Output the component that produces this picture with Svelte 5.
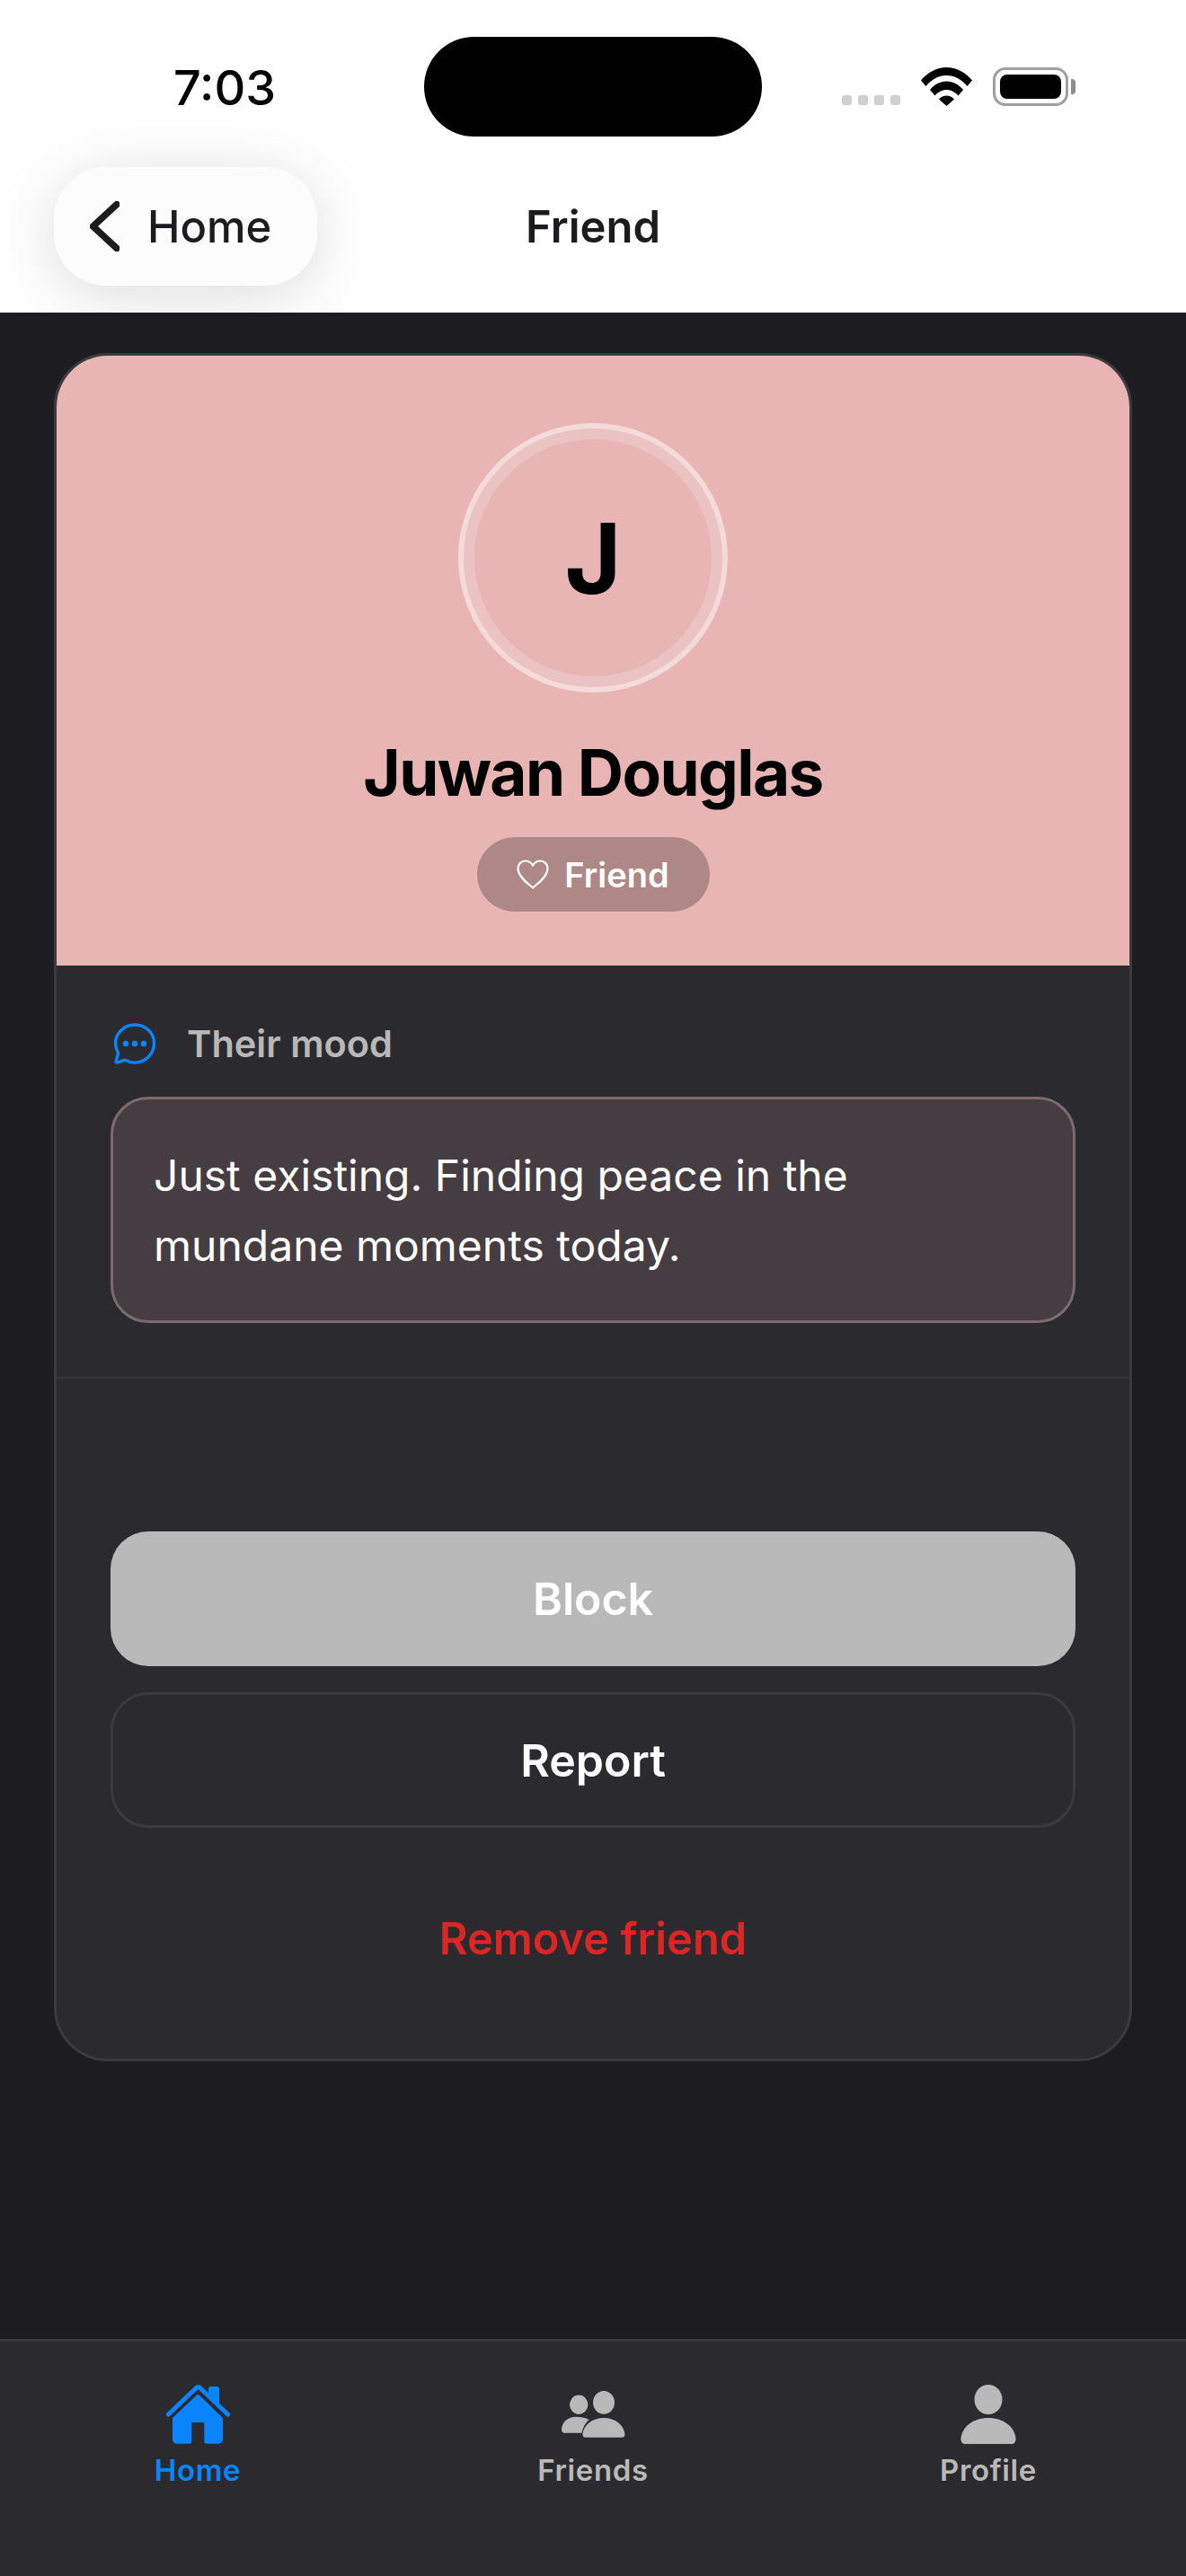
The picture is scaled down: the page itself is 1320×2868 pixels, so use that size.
<script lang="ts">
	const moodText = 'Just existing. Finding peace in the mundane moments today.';
	const tabs = [
		{ id: 'home', label: 'Home', active: true },
		{ id: 'friends', label: 'Friends', active: false },
		{ id: 'profile', label: 'Profile', active: false }
	];
</script>

<div class="screen">
	<header class="top">
		<div class="status">
			<div class="status-side"><span class="time">7:03</span></div>
			<div class="island"></div>
			<div class="status-side right">
				<div class="dots"><i></i><i></i><i></i><i></i></div>
				<svg class="wifi" width="57" height="43" viewBox="0 0 57 43">
					<path d="M0 14.5C7.5 5.5 17.5 0 28.5 0S49.5 5.5 57 14.5l-5.5 6.5C45.5 13.5 37.5 9 28.5 9S11.500 13.500 5.500 21z" />
					<path d="M10 25c5-6 11.500-9.500 18.500-9.500S42 19 47 25l-5.500 6.500c-3.500-4-8-6.500-13-6.500s-9.500 2.500-13 6.500z" />
					<path d="M20 35.500c2.200-2.500 5.200-4 8.500-4s6.300 1.500 8.500 4L28.500 43z" />
				</svg>
				<div class="battery"><div class="battery-fill"></div></div>
				<div class="battery-cap"></div>
			</div>
		</div>
		<nav class="nav">
			<button class="back">
				<svg width="33" height="56" viewBox="0 0 33 56" fill="none">
					<path d="M30 3.500 3.500 28 30 52.500" stroke="#1c1c1e" stroke-width="7.500" stroke-linecap="round" stroke-linejoin="round" />
				</svg>
				<span>Home</span>
			</button>
			<span class="nav-title">Friend</span>
			<span></span>
		</nav>
	</header>

	<main class="main">
		<section class="card">
			<div class="hero">
				<div class="avatar"><span>J</span></div>
				<h1 class="name">Juwan Douglas</h1>
				<div class="badge">
					<svg width="36" height="33" viewBox="0 0 36 33" fill="none">
						<path d="M18 31.500C14 27.500 1.500 19.500 1.500 10 1.500 5 5 1.500 9.800 1.500c3.500 0 6.500 1.800 8.200 5.200 1.700-3.400 4.700-5.200 8.200-5.200C31 1.500 34.500 5 34.500 10c0 9.500-12.500 17.500-16.500 21.500z" stroke="#fff" stroke-width="2.200" stroke-linejoin="round" />
					</svg>
					<span>Friend</span>
				</div>
			</div>

			<div class="mood">
				<div class="mood-head">
					<svg width="48" height="47" viewBox="0 0 48 47" fill="none">
						<path d="M24 2C12.500 2 2.500 11 2.500 22.500c0 3.600 1 7 2.700 10 .4.700.5 1.400.2 2.100l-2.300 7.900c-.3 1.100.6 2 1.600 1.500l7.200-2.600c.7-.3 1.400-.2 2 .1 3.100 1.700 6.500 2.600 10.100 2.600 11.800 0 21.500-9.600 21.500-21.500S35.800 2 24 2z" stroke="#0a84ff" stroke-width="3.400" stroke-linejoin="round" />
						<circle cx="14" cy="23" r="3.200" fill="#0a84ff" />
						<circle cx="24" cy="23" r="3.200" fill="#0a84ff" />
						<circle cx="34" cy="23" r="3.200" fill="#0a84ff" />
					</svg>
					<span>Their mood</span>
				</div>
				<p class="mood-box">{moodText}</p>
			</div>

			<div class="actions">
				<button class="btn block">Block</button>
				<button class="btn report">Report</button>
				<button class="btn remove">Remove friend</button>
			</div>
		</section>
	</main>

	<footer class="tabbar">
		{#each tabs as tab}
			<div class="tab" class:active={tab.active}>
				<div class="tab-icon">
					{#if tab.id === 'home'}
						<svg width="71" height="66" viewBox="0 0 71 66">
							<path d="M47 10V4.500C47 3 48 2 49.500 2h7C58 2 59 3 59 4.500V21z" fill="#0a84ff" />
							<path d="M2.500 33 33.500 3.500c1-1 3-1 4 0L68.500 33" fill="none" stroke="#0a84ff" stroke-width="5" stroke-linecap="round" stroke-linejoin="round" />
							<path d="M7 37 34 11.500c.800-.800 2-.800 2.800 0L63 37v24c0 2.700-2 4.700-4.700 4.700H45c-1.600 0-2.700-1.100-2.700-2.700V42H28.300v21c0 1.600-1.100 2.700-2.700 2.700H11.700C9 65.700 7 63.700 7 61z" fill="#0a84ff" />
						</svg>
					{:else if tab.id === 'friends'}
						<svg width="71" height="52" viewBox="0 0 71 52" fill="#b9b9b9">
							<ellipse cx="19.200" cy="15.300" rx="10.200" ry="10.700" />
							<ellipse cx="47" cy="12.800" rx="12" ry="12.900" />
							<path d="M0 43C.500 34 7.500 28.700 16 28.700c5 0 10.500 1 14.500 3.300-3.800 3.500-6.500 8-8 14.700H3.500C1.200 46.700 0 45.200 0 43z" />
							<path d="M23.500 48C24.500 38 34 30 47 30s22.500 8 23.400 18c.200 2.200-.900 3.700-2.900 3.700h-41c-2 0-3.200-1.500-3-3.700z" />
						</svg>
					{:else}
						<svg width="62" height="66" viewBox="0 0 62 66" fill="#b9b9b9">
							<ellipse cx="31" cy="16.500" rx="15.500" ry="16.500" />
							<path d="M.500 60C1.500 47 14 37 31 37s29.500 10 30.500 23c.200 3.500-1.500 6-4.500 6H5c-3 0-4.700-2.500-4.500-6z" />
						</svg>
					{/if}
				</div>
				<span class="tab-label">{tab.label}</span>
			</div>
		{/each}
	</footer>
</div>

<style>
	:global(body) {
		margin: 0;
		background: #1d1d21;
	}

	.screen {
		width: 1320px;
		height: 2868px;
		display: flex;
		flex-direction: column;
		font-family: Inter, 'Noto Sans', sans-serif;
		background: #1d1d21;
		overflow: hidden;
	}

	.top {
		height: 348px;
		background: #fff;
		flex: none;
		box-sizing: border-box;
		padding-top: 41px;
		overflow: hidden;
	}

	.status {
		display: grid;
		grid-template-columns: 472px 376px 472px;
		height: 111px;
	}
	.status-side {
		display: flex;
		align-items: center;
		padding-left: 193px;
	}
	.status-side.right {
		padding: 34px 0 0 89px;
		align-items: flex-start;
	}
	.time {
		font-size: 54px;
		font-weight: 500;
		color: #000;
		line-height: 1;
		margin-top: 2px;
		white-space: nowrap;
	}
	.island {
		background: #000;
		border-radius: 56px;
	}
	.dots {
		display: flex;
		gap: 7px;
		margin-top: 31px;
	}
	.dots i {
		width: 11px;
		height: 11px;
		border-radius: 3px;
		background: #d0d0d0;
	}
	.wifi {
		margin-left: 23px;
		fill: #000;
	}
	.battery {
		width: 84px;
		height: 43px;
		box-sizing: border-box;
		border: 3px solid #a0a0a0;
		border-radius: 14px;
		padding: 5px;
		margin-left: 23px;
	}
	.battery-fill {
		height: 100%;
		background: #000;
		border-radius: 8px;
	}
	.battery-cap {
		width: 5px;
		height: 17px;
		background: #8e8e8e;
		border-radius: 0 4px 4px 0;
		margin: 13px 0 0 3px;
	}

	.nav {
		display: grid;
		grid-template-columns: 1fr auto 1fr;
		align-items: center;
		padding: 0 60px;
		margin-top: 34px;
	}
	.back {
		justify-self: start;
		width: 293px;
		height: 132px;
		box-sizing: border-box;
		display: flex;
		align-items: center;
		gap: 31px;
		padding: 0 0 0 40px;
		border: none;
		border-radius: 58px;
		background: #fcfcfc;
		box-shadow: 0 10px 70px rgba(0, 0, 0, 0.14);
		font: 500 49px Inter, sans-serif;
		color: #1c1c1e;
	}
	.nav-title {
		font-size: 49px;
		font-weight: 600;
		color: #1c1c1e;
	}

	.main {
		flex: 1;
		padding: 45px 60px 0;
		box-sizing: border-box;
	}

	.card {
		border: 3px solid #3a3a3f;
		border-radius: 60px;
		background: #2b2b2f;
		overflow: hidden;
	}

	.hero {
		background: #e8b4b4;
		display: flex;
		flex-direction: column;
		align-items: center;
		padding: 75px 0 60px;
	}
	.avatar {
		width: 300px;
		height: 300px;
		box-sizing: border-box;
		border-radius: 50%;
		border: 6px solid rgba(255, 255, 255, 0.5);
		box-shadow: inset 0 0 0 12px rgba(255, 255, 255, 0.2);
		display: flex;
		align-items: center;
		justify-content: center;
		font-size: 108px;
		font-weight: 700;
		color: #000;
	}
	.name {
		margin: 45px 0 28px;
		font-size: 71px;
		line-height: 88px;
		font-weight: 700;
		color: #000;
		letter-spacing: -1.6px;
	}
	.badge {
		height: 83px;
		width: 259px;
		box-sizing: border-box;
		border-radius: 42px;
		background: rgba(0, 0, 0, 0.25);
		display: flex;
		align-items: center;
		justify-content: center;
		gap: 17px;
		color: #fff;
		font-size: 38px;
		font-weight: 600;
	}

	.mood {
		padding: 64px 60px 60px;
		border-bottom: 2px solid #36363a;
	}
	.mood-head {
		display: flex;
		align-items: center;
		gap: 34px;
		margin: 0 0 35px 3px;
		color: #b8b8b8;
		font-size: 41.5px;
		font-weight: 600;
	}
	.mood-head span {
		line-height: 47px;
	}
	.mood-box {
		margin: 0;
		box-sizing: border-box;
		height: 252px;
		padding: 46px 120px 44px 45px;
		border: 3px solid #7d6a6b;
		border-radius: 42px;
		background: #463d42;
		color: #fff;
		font-size: 48px;
		line-height: 78px;
	}

	.actions {
		padding: 170px 60px 59px;
		display: flex;
		flex-direction: column;
		gap: 29px;
	}
	.btn {
		height: 150px;
		border: none;
		border-radius: 42px;
		background: none;
		font: 600 50px Inter, sans-serif;
		color: #fff;
	}
	.block {
		background: #b9b9b9;
	}
	.report {
		height: 151px;
		border: 3px solid #3a3a3f;
	}
	.remove {
		color: #dc2626;
		margin-top: 19px;
		font-size: 48.8px;
	}

	.tabbar {
		flex: none;
		height: 264px;
		box-sizing: border-box;
		border-top: 3px solid #3a3a3f;
		background: #2b2b2f;
		display: grid;
		grid-template-columns: repeat(3, 1fr);
		padding-top: 48px;
	}
	.tab {
		display: flex;
		flex-direction: column;
		align-items: center;
		color: #b9b9b9;
	}
	.tab.active {
		color: #0a84ff;
	}
	.tab-icon {
		height: 66px;
		display: flex;
		align-items: center;
	}
	.tab-label {
		margin-top: 9px;
		font-size: 33px;
		line-height: 40px;
		font-weight: 600;
		letter-spacing: 0.6px;
	}
</style>
